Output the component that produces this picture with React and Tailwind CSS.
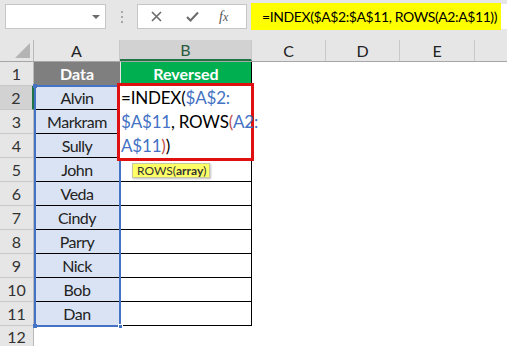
import React from "react";

const names = ["Alvin", "Markram", "Sully", "John", "Veda", "Cindy", "Parry", "Nick", "Bob", "Dan"];

function RowNum({ n, selected }) {
  return (
    <div
      className={
        "w-[34px] h-full flex items-center justify-center text-[16px] tracking-normal text-[#333] border-b border-[#c9c9c9] " +
        (selected ? "bg-[#d2d2d2] border-r-2 border-r-[#217346]" : "bg-[#e6e6e6] border-r border-r-[#b9b9b9]")
      }
    >
      {n}
    </div>
  );
}

export default function App() {
  const blue = "text-[#4472c4]";
  const paren = "text-[#c0504d]";
  return (
    <div className="w-[507px] h-[346px] overflow-hidden bg-white relative font-['Lato',sans-serif]">
      {/* formula bar */}
      <div className="h-[40px] bg-[#e6e6e6] flex items-start pt-[4px]">
        <div className="ml-[5px] w-[101px] h-[25px] bg-white border border-[#c6c6c6] flex items-center justify-end pr-[5px]">
          <div className="w-0 h-0 border-l-[4px] border-r-[4px] border-t-[4px] border-l-transparent border-r-transparent border-t-[#6b6b6b]" />
        </div>
        <div className="ml-[14px] w-[3px] h-[25px] flex flex-col items-center justify-center gap-[3px]">
          <div className="w-[2px] h-[2px] bg-[#a6a6a6]" />
          <div className="w-[2px] h-[2px] bg-[#a6a6a6]" />
          <div className="w-[2px] h-[2px] bg-[#a6a6a6]" />
        </div>
        <div className="ml-[14px] w-[110px] h-[25px] bg-white border border-[#c6c6c6] flex items-center text-[#6b6b6b]">
          <svg className="ml-[13px]" width="11" height="11" viewBox="0 0 11 11">
            <path d="M1 1 L10 10 M10 1 L1 10" stroke="#6b6b6b" strokeWidth="1.6" fill="none" />
          </svg>
          <svg className="ml-[24px]" width="13" height="11" viewBox="0 0 13 11">
            <path d="M1 6 L4.5 9.5 L12 1.5" stroke="#6b6b6b" strokeWidth="2" fill="none" />
          </svg>
          <span className="ml-[20px] text-[14px] italic font-['Liberation_Serif',serif] text-[#555]">
            f<span className="text-[12px]">x</span>
          </span>
        </div>
        <div className="ml-[4px] w-[250px] h-[27px] mt-[-1px] bg-[#ffff00] flex items-center pl-[11px] text-[14px] tracking-[-0.4px] text-black whitespace-nowrap">
          =INDEX($A$2:$A$11, ROWS(A2:A$11))
        </div>
        <div className="flex-1 h-[25px] bg-white" />
      </div>

      {/* column headers */}
      <div className="h-[22px] flex bg-[#e6e6e6] border-b border-[#a6a6a6] text-[16px] text-[#222]">
        <div className="w-[34px] h-full relative border-r border-[#b9b9b9]">
          <svg className="absolute right-[3px] bottom-[3px]" width="15" height="15" viewBox="0 0 15 15">
            <path d="M15 0 L15 15 L0 15 Z" fill="#b4b4b4" />
          </svg>
        </div>
        <div className="w-[86px] h-full flex items-center justify-center border-r border-[#c9c9c9]">A</div>
        <div className="w-[132px] h-full flex items-center justify-center bg-[#d2d2d2] border-b-2 border-[#217346] text-[#2b5b3f] border-r border-r-[#c9c9c9]">B</div>
        <div className="w-[74px] h-full flex items-center justify-center border-r border-[#c9c9c9]">C</div>
        <div className="w-[74px] h-full flex items-center justify-center border-r border-[#c9c9c9]">D</div>
        <div className="w-[75px] h-full flex items-center justify-center border-r border-[#c9c9c9]">E</div>
        <div className="flex-1 h-full" />
      </div>

      {/* row 1 */}
      <div className="h-[24px] flex text-[16px]">
        <RowNum n={1} />
        <div className="w-[86px] h-full flex items-center justify-center bg-[#7f7f7f] text-white font-bold border-b border-black">Data</div>
        <div className="w-[132px] h-full flex items-center justify-center bg-[#00b050] text-white font-bold border-b border-black border-l border-l-[#e6e6e6] border-r border-r-black">Reversed</div>
        <div className="flex-1" />
      </div>

      {names.map((nm, i) => (
        <div key={nm} className="h-[24px] flex text-[16px] text-[#222]">
          <RowNum n={i + 2} selected={i === 0} />
          <div className="w-[86px] h-full flex items-center justify-center bg-[#dae3f3] border-b border-black tracking-[-0.5px]">{nm}</div>
          <div className="w-[132px] h-full bg-white border-b border-r border-black" />
          <div className="flex-1" />
        </div>
      ))}

      <div className="h-[20px] flex">
        <div className="w-[34px] h-full bg-[#e6e6e6] border-r border-[#b9b9b9] flex items-start justify-center pt-[2px] text-[16px] leading-[18px] text-[#333]">12</div>
        <div className="flex-1" />
      </div>

      {/* selection A2:A11 */}
      <div className="absolute left-[34px] top-[85px] w-[87px] h-[242px] border-2 border-[#4472c4]" />
      <div className="absolute left-[33px] top-[84px] w-[4px] h-[4px] bg-[#4472c4]" />
      <div className="absolute left-[33px] top-[324px] w-[4px] h-[4px] bg-[#4472c4]" />
      <div className="absolute left-[118px] top-[324px] w-[5px] h-[5px] bg-[#4472c4] border border-white" />

      {/* in-cell edit box */}
      <div className="absolute left-[117px] top-[83px] w-[137px] h-[78px] bg-white border-[3px] border-[#e01010] pl-[1px] text-[17px] tracking-[-0.2px] leading-[24px] text-black whitespace-nowrap">
        <div>
          =INDEX(<span className={blue}>$A$2:</span>
        </div>
        <div>
          <span className={blue}>$A$11</span>, ROWS<span className={paren}>(</span>
          <span className={blue}>A2:</span>
        </div>
        <div>
          <span className={blue}>A$11</span>
          <span className={paren}>)</span>)
        </div>
      </div>

      {/* tooltip */}
      <div className="absolute left-[132px] top-[163px] w-[78px] h-[15px] bg-[#ffff66] border border-[#c8c8a0] shadow-[1px_1px_2px_rgba(0,0,0,0.25)] flex items-center pl-[4px] text-[12px] text-[#333] leading-none">
        ROWS(<span className="font-bold">array</span>)
      </div>
    </div>
  );
}
